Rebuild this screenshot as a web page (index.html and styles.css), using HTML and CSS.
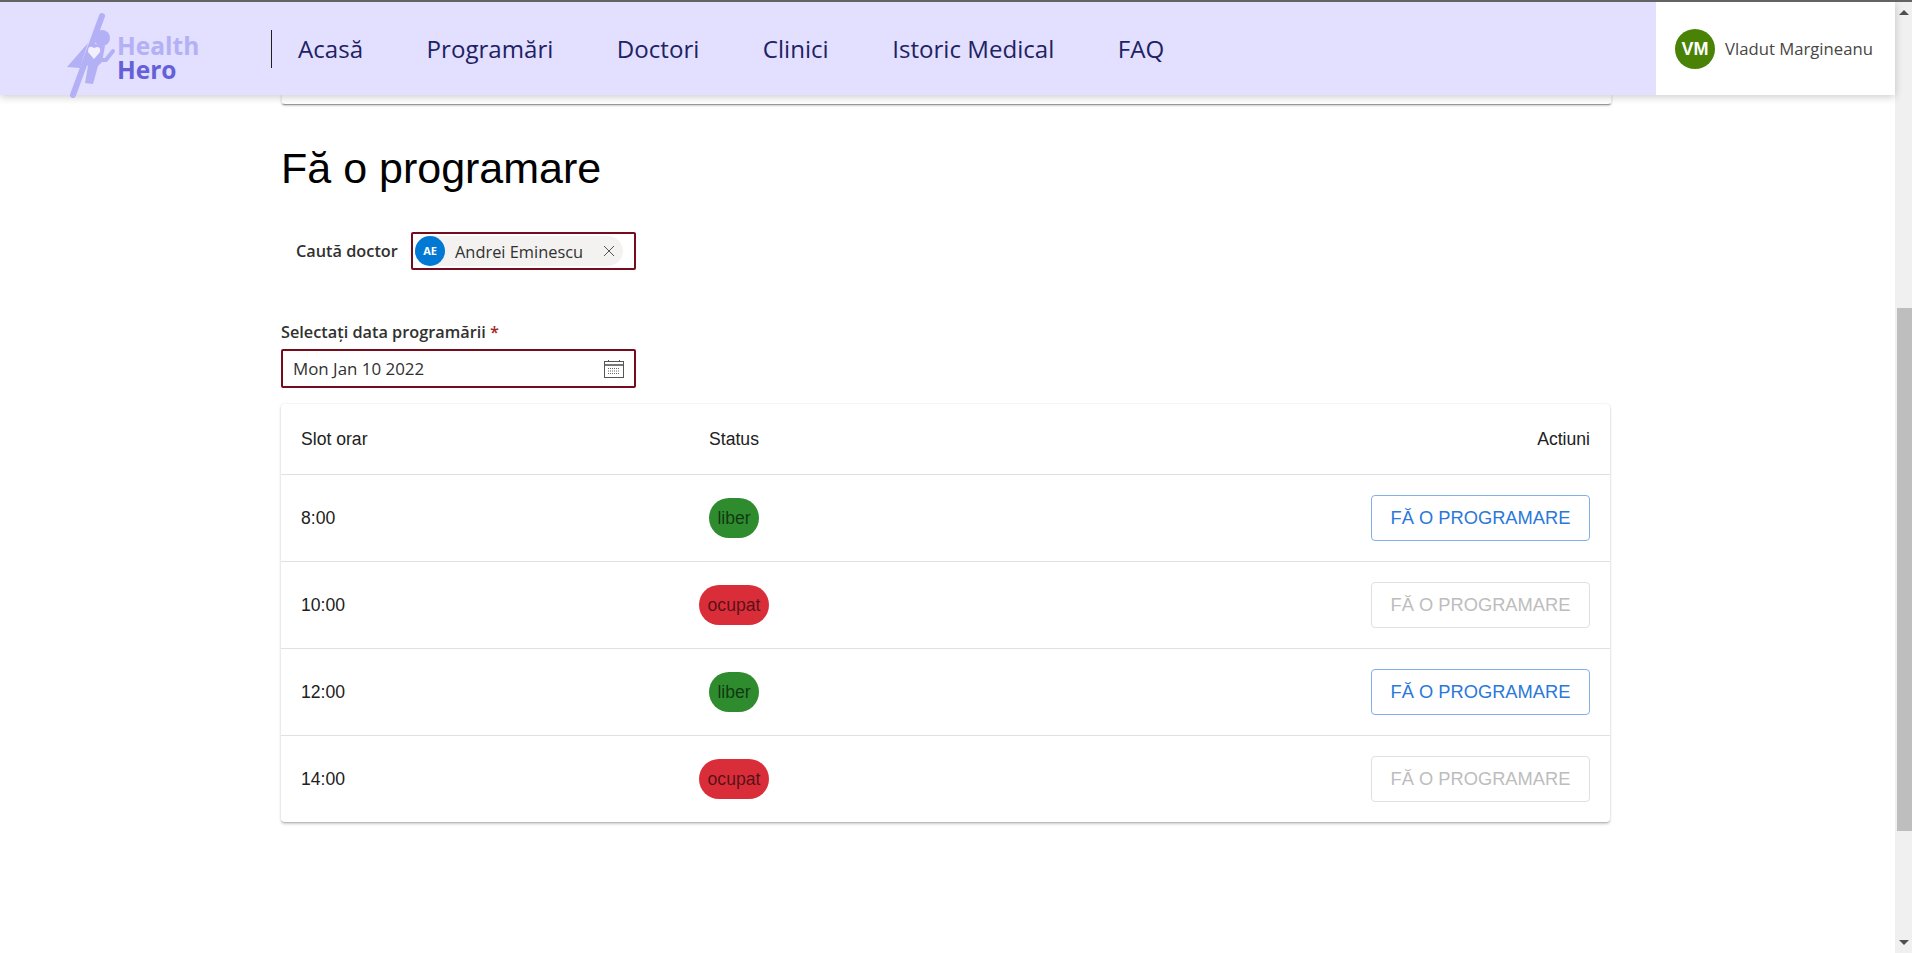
FILE: index.html
```html
<!DOCTYPE html>
<html lang="en">
<head>
    <meta charset="UTF-8">
    <meta name="viewport" content="width=device-width, initial-scale=1.0">
    <title>Health Hero</title>
    <link rel="stylesheet" href="styles.css">
</head>
<body>
    <div class="page">
        <header class="navbar">
            <div class="logo">
                <svg class="logo-figure" width="140" height="90" viewBox="0 0 140 90">
                    <path d="M42 6 L13 85" stroke="#b4b0f5" stroke-width="6" stroke-linecap="round" fill="none"/>
                    <path d="M28 33 L7 57 L20 58 Z" fill="#b4b0f5"/>
                    <circle cx="42" cy="28" r="8" fill="#b4b0f5"/>
                    <path d="M30 33 L45 36 L42 52 L38 56 L33 74 L25 73 L28 56 L24 52 Z" fill="#b4b0f5"/>
                    <path d="M42 50 L46 50 L53 41" stroke="#b4b0f5" stroke-width="4" stroke-linecap="round" stroke-linejoin="round" fill="none"/>
                    <path d="M34 49 L28 42 Q28 36 32 37 L34 38 L37 37 Q41 37 40 42 Z" fill="#f2f0ff"/>
                    <text class="logo-health" x="57" y="45">Health</text>
                    <text class="logo-hero" x="57" y="69">Hero</text>
                </svg>
            </div>
            <nav class="nav-links">
                <a href="#">Acasă</a>
                <a href="#">Programări</a>
                <a href="#">Doctori</a>
                <a href="#">Clinici</a>
                <a href="#">Istoric Medical</a>
                <a href="#">FAQ</a>
            </nav>
            <div class="user">
                <span class="user-avatar">VM</span>
                <span class="user-name">Vladut Margineanu</span>
            </div>
        </header>

        <main class="content">
            <div class="card-end"></div>
            <h1>Fă o programare</h1>

            <div class="doctor-row">
                <label>Caută doctor</label>
                <div class="picker">
                    <div class="chip">
                        <span class="chip-avatar">AE</span>
                        <span class="chip-name">Andrei Eminescu</span>
                        <svg class="chip-close" width="12" height="12" viewBox="0 0 12 12">
                            <path d="M1 1 L11 11 M11 1 L1 11" stroke="#555" stroke-width="1" fill="none"/>
                        </svg>
                    </div>
                </div>
            </div>

            <div class="date-field">
                <label>Selectați data programării <span class="required">*</span></label>
                <div class="date-input">
                    <span>Mon Jan 10 2022</span>
                    <svg width="20" height="20" viewBox="0 0 20 20">
                        <rect x="0.5" y="2.5" width="19" height="16" fill="none" stroke="#555"/>
                        <path d="M1 5.5 H19 M1 6.5 H19" stroke="#777"/>
                        <path d="M4.5 1 V3 M15.5 1 V3" stroke="#555"/>
                        <path d="M4 9.5 H16 M4 12 H16 M4 14.5 H16" stroke="#666" stroke-dasharray="1 1"/>
                    </svg>
                </div>
            </div>

            <div class="table-card">
                <div class="row head">
                    <div class="col-slot">Slot orar</div>
                    <div class="col-status">Status</div>
                    <div class="col-action">Actiuni</div>
                </div>
                <div class="row">
                    <div class="col-slot">8:00</div>
                    <div class="col-status"><span class="pill free">liber</span></div>
                    <div class="col-action"><button>Fă o programare</button></div>
                </div>
                <div class="row">
                    <div class="col-slot">10:00</div>
                    <div class="col-status"><span class="pill busy">ocupat</span></div>
                    <div class="col-action"><button disabled>Fă o programare</button></div>
                </div>
                <div class="row">
                    <div class="col-slot">12:00</div>
                    <div class="col-status"><span class="pill free">liber</span></div>
                    <div class="col-action"><button>Fă o programare</button></div>
                </div>
                <div class="row">
                    <div class="col-slot">14:00</div>
                    <div class="col-status"><span class="pill busy">ocupat</span></div>
                    <div class="col-action"><button disabled>Fă o programare</button></div>
                </div>
            </div>
        </main>
    </div>

    <div class="scrollbar">
        <span class="arrow up"></span>
        <div class="track"><div class="thumb"></div></div>
        <span class="arrow down"></span>
    </div>
</body>
</html>
```

FILE: styles.css
```css
html, body {
    height: 100%;
}
body {
    margin: 0;
    display: flex;
    overflow: hidden;
    background: #fff;
    font-family: "Liberation Sans", Arial, sans-serif;
    color: #201f1e;
    border-top: 2px solid #636363;
    box-sizing: border-box;
}
.page {
    flex: 1;
    min-width: 0;
}
.navbar {
    display: flex;
    align-items: center;
    height: 93px;
    background: #e2dfff;
    box-shadow: 0 2px 8px rgba(0, 0, 0, 0.2);
    position: relative;
    z-index: 1;
}
.logo {
    display: flex;
    align-items: center;
    width: 271px;
    height: 93px;
    padding-left: 60px;
    box-sizing: border-box;
    flex-shrink: 0;
}
.logo-figure {
    flex-shrink: 0;
    margin-top: 13px;
}
.logo-health, .logo-hero {
    font-family: "Open Sans", sans-serif;
    font-weight: 700;
    font-size: 24.5px;
}
.logo-health {
    fill: #b4b0f5;
}
.logo-hero {
    fill: #6560d8;
}
.nav-links {
    flex: 1;
    display: flex;
    align-items: center;
    gap: 63.5px;
    height: 38px;
    border-left: 1px solid #201f1e;
    padding-left: 26px;
}
.nav-links a {
    font-family: "Open Sans", sans-serif;
    font-size: 24.1px;
    font-weight: 500;
    color: #1f2263;
    text-decoration: none;
}
.user {
    display: flex;
    align-items: center;
    width: 239px;
    height: 93px;
    padding-left: 19px;
    box-sizing: border-box;
    background: #fff;
}
.user-avatar {
    width: 40px;
    height: 40px;
    border-radius: 50%;
    background: #498205;
    color: #fff;
    font-weight: 700;
    font-size: 18px;
    line-height: 40px;
    text-align: center;
}
.user-name {
    margin-left: 10px;
    font-family: "Open Sans", sans-serif;
    font-size: 16.7px;
    color: #484644;
}
.content {
    width: 1331px;
    margin-left: 281px;
}
.card-end {
    height: 9px;
    border: 1px solid #eee;
    border-top: none;
    border-bottom: 1px solid #999;
    border-radius: 0 0 4px 4px;
    box-shadow: 0 1px 2px rgba(0, 0, 0, 0.2);
}
h1 {
    margin: 39px 0 0;
    font-size: 43px;
    font-weight: 400;
    line-height: 48px;
    color: #000;
}
.doctor-row {
    display: flex;
    align-items: center;
    margin-top: 40px;
    padding-left: 15px;
}
.doctor-row label {
    font-family: "Open Sans", sans-serif;
    font-size: 16.3px;
    font-weight: 600;
    color: #323130;
    width: 115px;
    white-space: nowrap;
}
.picker {
    width: 225px;
    height: 38px;
    border: 2px solid #750b1c;
    border-radius: 2px;
    box-sizing: border-box;
    padding: 2px;
}
.chip {
    display: flex;
    align-items: center;
    width: 208px;
    height: 30px;
    background: #f3f2f1;
    border-radius: 15px;
}
.chip-avatar {
    width: 30px;
    height: 30px;
    border-radius: 50%;
    background: #0078d4;
    color: #fff;
    font-family: "Open Sans", sans-serif;
    font-size: 11px;
    font-weight: 700;
    line-height: 30px;
    text-align: center;
}
.chip-name {
    margin-left: 10px;
    font-family: "Open Sans", sans-serif;
    font-size: 16.4px;
    color: #323130;
}
.chip-close {
    margin-left: auto;
    margin-right: 8px;
}
.date-field {
    margin-top: 51px;
    width: 355px;
}
.date-field label {
    display: block;
    font-family: "Open Sans", sans-serif;
    font-size: 16.3px;
    font-weight: 600;
    line-height: 22px;
    color: #323130;
}
.required {
    color: #a4262c;
}
.date-input {
    display: flex;
    align-items: center;
    justify-content: space-between;
    height: 39px;
    margin-top: 6px;
    padding: 0 10px;
    border: 2px solid #750b1c;
    border-radius: 2px;
    box-sizing: border-box;
    font-family: "Open Sans", sans-serif;
    font-size: 16.9px;
    color: #323130;
}
.table-card {
    margin-top: 16px;
    width: 1329px;
    border-radius: 4px;
    border-bottom: 1px solid #bbb;
    box-shadow: 0 1px 3px rgba(0, 0, 0, 0.2), 0 0 2px rgba(0, 0, 0, 0.06);
}
.row {
    display: flex;
    align-items: center;
    height: 87px;
    padding: 0 20px;
    border-bottom: 1px solid #e0e0e0;
    box-sizing: border-box;
    font-size: 17.6px;
    color: #212121;
}
.row.head {
    height: 71px;
}
.row:last-child {
    height: 86px;
    border-bottom: none;
}
.col-slot {
    width: 398px;
}
.col-status {
    width: 70px;
    display: flex;
    justify-content: center;
}
.col-action {
    flex: 1;
    text-align: right;
}
.pill {
    height: 40px;
    line-height: 40px;
    border-radius: 20px;
    text-align: center;
    color: rgba(0, 0, 0, 0.62);
    flex-shrink: 0;
}
.pill.free {
    width: 50px;
    background: #2e8b2e;
}
.pill.busy {
    width: 70px;
    background: #d92d3a;
}
button {
    width: 219px;
    height: 46px;
    background: #fff;
    border: 1px solid #80b0e6;
    border-radius: 4px;
    font-family: "Liberation Sans", Arial, sans-serif;
    font-size: 18.3px;
    text-transform: uppercase;
    color: #2a78d8;
    cursor: pointer;
}
button:disabled {
    border-color: #e0e0e0;
    color: #bdbdbd;
}
.scrollbar {
    width: 17px;
    flex-shrink: 0;
    display: flex;
    flex-direction: column;
    align-items: center;
    background: #f0f0f0;
}
.track {
    flex: 1;
    width: 100%;
}
.thumb {
    width: 15px;
    height: 523px;
    margin: 285px 0 0 2px;
    background: #bebebe;
}
.arrow {
    width: 0;
    height: 0;
    margin: 8px 0;
    border-left: 5px solid transparent;
    border-right: 5px solid transparent;
}
.arrow.up {
    border-bottom: 5px solid #505050;
}
.arrow.down {
    border-top: 5px solid #505050;
}
```
